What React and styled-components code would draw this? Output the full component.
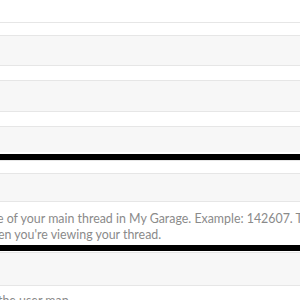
import React from "react";
import styled, { createGlobalStyle } from "styled-components";

const Global = createGlobalStyle`
  html, body { margin: 0; padding: 0; background: #fff; }
  body { font-family: Lato, "Open Sans", sans-serif; overflow: hidden; }
`;

const Page = styled.div`
  width: 300px;
  height: 300px;
  overflow: hidden;
  display: flex;
  flex-direction: column;
  padding-top: 22px;
  box-sizing: border-box;
`;

const Band = styled.div`
  flex: none;
  height: ${(p) => p.$h}px;
  background: ${(p) => (p.$tone === "gray" ? "#f7f7f7" : "#fff")};
  border-top: 1px solid #e6e6e6;
`;

const Rule = styled.div`
  flex: none;
  height: 6px;
  background: #000;
  margin: ${(p) => p.$m || "0"};
`;

const HintBox = styled.div`
  flex: none;
  background: #fff;
  border-top: 1px solid #e6e6e6;
  padding: 9px 0 1px;
  height: 32px;
  overflow: hidden;
`;

const Hint = styled.p`
  margin: 0;
  font-size: 12.4px;
  line-height: 16px;
  color: #8a8a8a;
  white-space: nowrap;
  margin-left: ${(p) => p.$shift}px;
`;

const Label = styled.p`
  margin: 0;
  padding-top: 3px;
  font-size: 12.4px;
  line-height: 16px;
  color: #8a8a8a;
  white-space: nowrap;
  margin-left: -2px;
`;

export default function App() {
  return (
    <>
      <Global />
      <Page>
        <Band $tone="white" $h={12} />
        <Band $tone="gray" $h={29} />
        <Band $tone="white" $h={14} />
        <Band $tone="gray" $h={30} />
        <Band $tone="white" $h={14} />
        <Band $tone="gray" $h={25} />
        <Rule $m="2px 0 0" />
        <Band $tone="white" $h={12} />
        <Band $tone="gray" $h={27} />
        <HintBox>
          <Hint $shift={-3}>e of your main thread in My Garage. Example: 142607. T</Hint>
          <Hint $shift={-2}>en you're viewing your thread.</Hint>
        </HintBox>
        <Rule $m="1px 0 1px" />
        <Band $tone="gray" $h={32} />
        <Band $tone="white" $h={4} />
        <Label>the user map</Label>
      </Page>
    </>
  );
}
